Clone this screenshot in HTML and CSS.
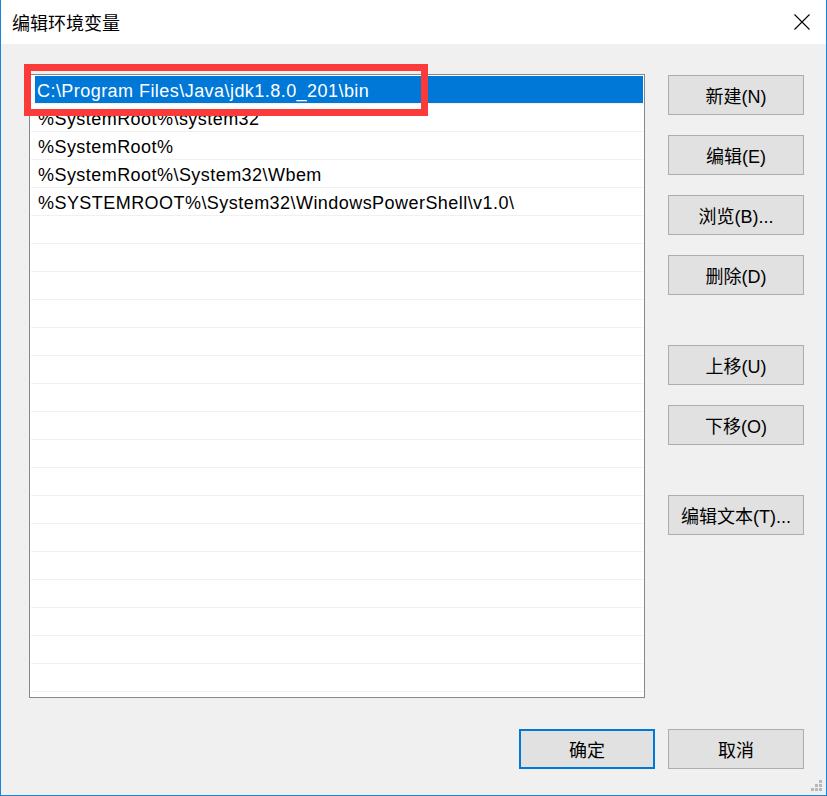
FILE: index.html
```html
<!DOCTYPE html>
<html lang="zh-CN">
<head>
<meta charset="utf-8">
<title>编辑环境变量</title>
<link rel="stylesheet" href="styles.css">
</head>
<body>
<div class="window">
  <div class="titlebar">
    <span class="title">编辑环境变量</span>
    <div class="close">
      <svg width="16" height="16" viewBox="0 0 16 16"><path d="M0.5 0.5 L15.5 15.5 M15.5 0.5 L0.5 15.5" stroke="#000" stroke-width="1.1" fill="none"/></svg>
    </div>
  </div>
  <div class="content">
    <div class="main">
      <div class="list">
        <div class="row"><span class="edit"><span class="sel">C:\Program Files\Java\jdk1.8.0_201\bin</span></span></div>
        <div class="row">%SystemRoot%\system32</div>
        <div class="row">%SystemRoot%</div>
        <div class="row">%SystemRoot%\System32\Wbem</div>
        <div class="row">%SYSTEMROOT%\System32\WindowsPowerShell\v1.0\</div>
        <div class="row"></div>
        <div class="row"></div>
        <div class="row"></div>
        <div class="row"></div>
        <div class="row"></div>
        <div class="row"></div>
        <div class="row"></div>
        <div class="row"></div>
        <div class="row"></div>
        <div class="row"></div>
        <div class="row"></div>
        <div class="row"></div>
        <div class="row"></div>
        <div class="row"></div>
        <div class="row"></div>
        <div class="row"></div>
        <div class="row"></div>
      </div>
      <div class="side">
        <div class="group">
          <div class="btn">新建(N)</div>
          <div class="btn">编辑(E)</div>
          <div class="btn">浏览(B)...</div>
          <div class="btn">删除(D)</div>
        </div>
        <div class="group">
          <div class="btn">上移(U)</div>
          <div class="btn">下移(O)</div>
        </div>
        <div class="group">
          <div class="btn">编辑文本(T)...</div>
        </div>
      </div>
    </div>
    <div class="footer">
      <div class="btn default">确定</div>
      <div class="btn">取消</div>
    </div>
  </div>
  <div class="highlight"></div>
  <div class="grip">
    <span class="dot d1"></span>
    <span class="dot d2"></span><span class="dot d3"></span>
    <span class="dot d4"></span><span class="dot d5"></span><span class="dot d6"></span>
  </div>
</div>
</body>
</html>
```
FILE: styles.css
```css
* { box-sizing: border-box; }
html, body { margin: 0; padding: 0; }
body {
  font-family: "Liberation Sans", "Noto Sans CJK SC", sans-serif;
  color: #000;
  background: #f0f0f0;
}
.window {
  position: relative;
  width: 827px;
  height: 796px;
  border-left: 1px solid #1883d7;
  border-right: 1px solid #1883d7;
  border-bottom: 1px solid #1883d7;
  background: #f0f0f0;
  display: flex;
  flex-direction: column;
  overflow: hidden;
}
.titlebar {
  height: 44px;
  background: #fff;
  display: flex;
  align-items: center;
  justify-content: space-between;
  padding-left: 11px;
}
.title {
  font-family: "Noto Sans CJK SC", sans-serif;
  font-size: 18px;
  line-height: 44px;
}
.close {
  width: 48px;
  height: 44px;
  display: flex;
  align-items: center;
  justify-content: center;
}
.close svg { display: block; }
.content {
  flex: 1;
  padding: 30px 22px 0 28px;
  display: flex;
  flex-direction: column;
}
.main {
  display: flex;
  gap: 23px;
}
.list {
  width: 616px;
  height: 624px;
  border: 1px solid #828790;
  background: #fff;
  padding: 1px 1px 0 1px;
  overflow: hidden;
}
.row {
  height: 28px;
  border-bottom: 1px solid #f0f0f0;
  font-size: 18px;
  letter-spacing: 0.45px;
  line-height: 24px;
  padding-top: 3px;
  padding-left: 7px;
  white-space: nowrap;
  display: flex;
}
.row:first-child { padding-left: 4px; padding-top: 0; }
.edit {
  flex: 1;
  background: #0078d7;
  height: 27px;
  line-height: 24px;
  padding-top: 3px;
  padding-left: 2px;
}
.sel { color: #fff; }
.side {
  padding-top: 1px;
  display: flex;
  flex-direction: column;
  gap: 50px;
}
.group {
  display: flex;
  flex-direction: column;
  gap: 20px;
}
.btn {
  width: 136px;
  height: 40px;
  background: #e1e1e1;
  border: 1px solid #adadad;
  font-size: 18px;
  display: flex;
  align-items: center;
  justify-content: center;
  white-space: nowrap;
}
.btn.default { border: 2px solid #0078d7; }
.footer {
  margin-top: 31px;
  display: flex;
  justify-content: flex-end;
  gap: 13px;
}
.highlight {
  position: absolute;
  left: 23px;
  top: 64px;
  width: 404px;
  height: 52px;
  border: 7px solid #fb3a3a;
}
.grip {
  position: absolute;
  right: 4px;
  bottom: 4px;
  width: 11px;
  height: 11px;
}
.dot {
  position: absolute;
  width: 3px;
  height: 3px;
  background: #b8b8b8;
}
.d1 { left: 8px; top: 0; }
.d2 { left: 4px; top: 4px; }
.d3 { left: 8px; top: 4px; }
.d4 { left: 0; top: 8px; }
.d5 { left: 4px; top: 8px; }
.d6 { left: 8px; top: 8px; }
```
